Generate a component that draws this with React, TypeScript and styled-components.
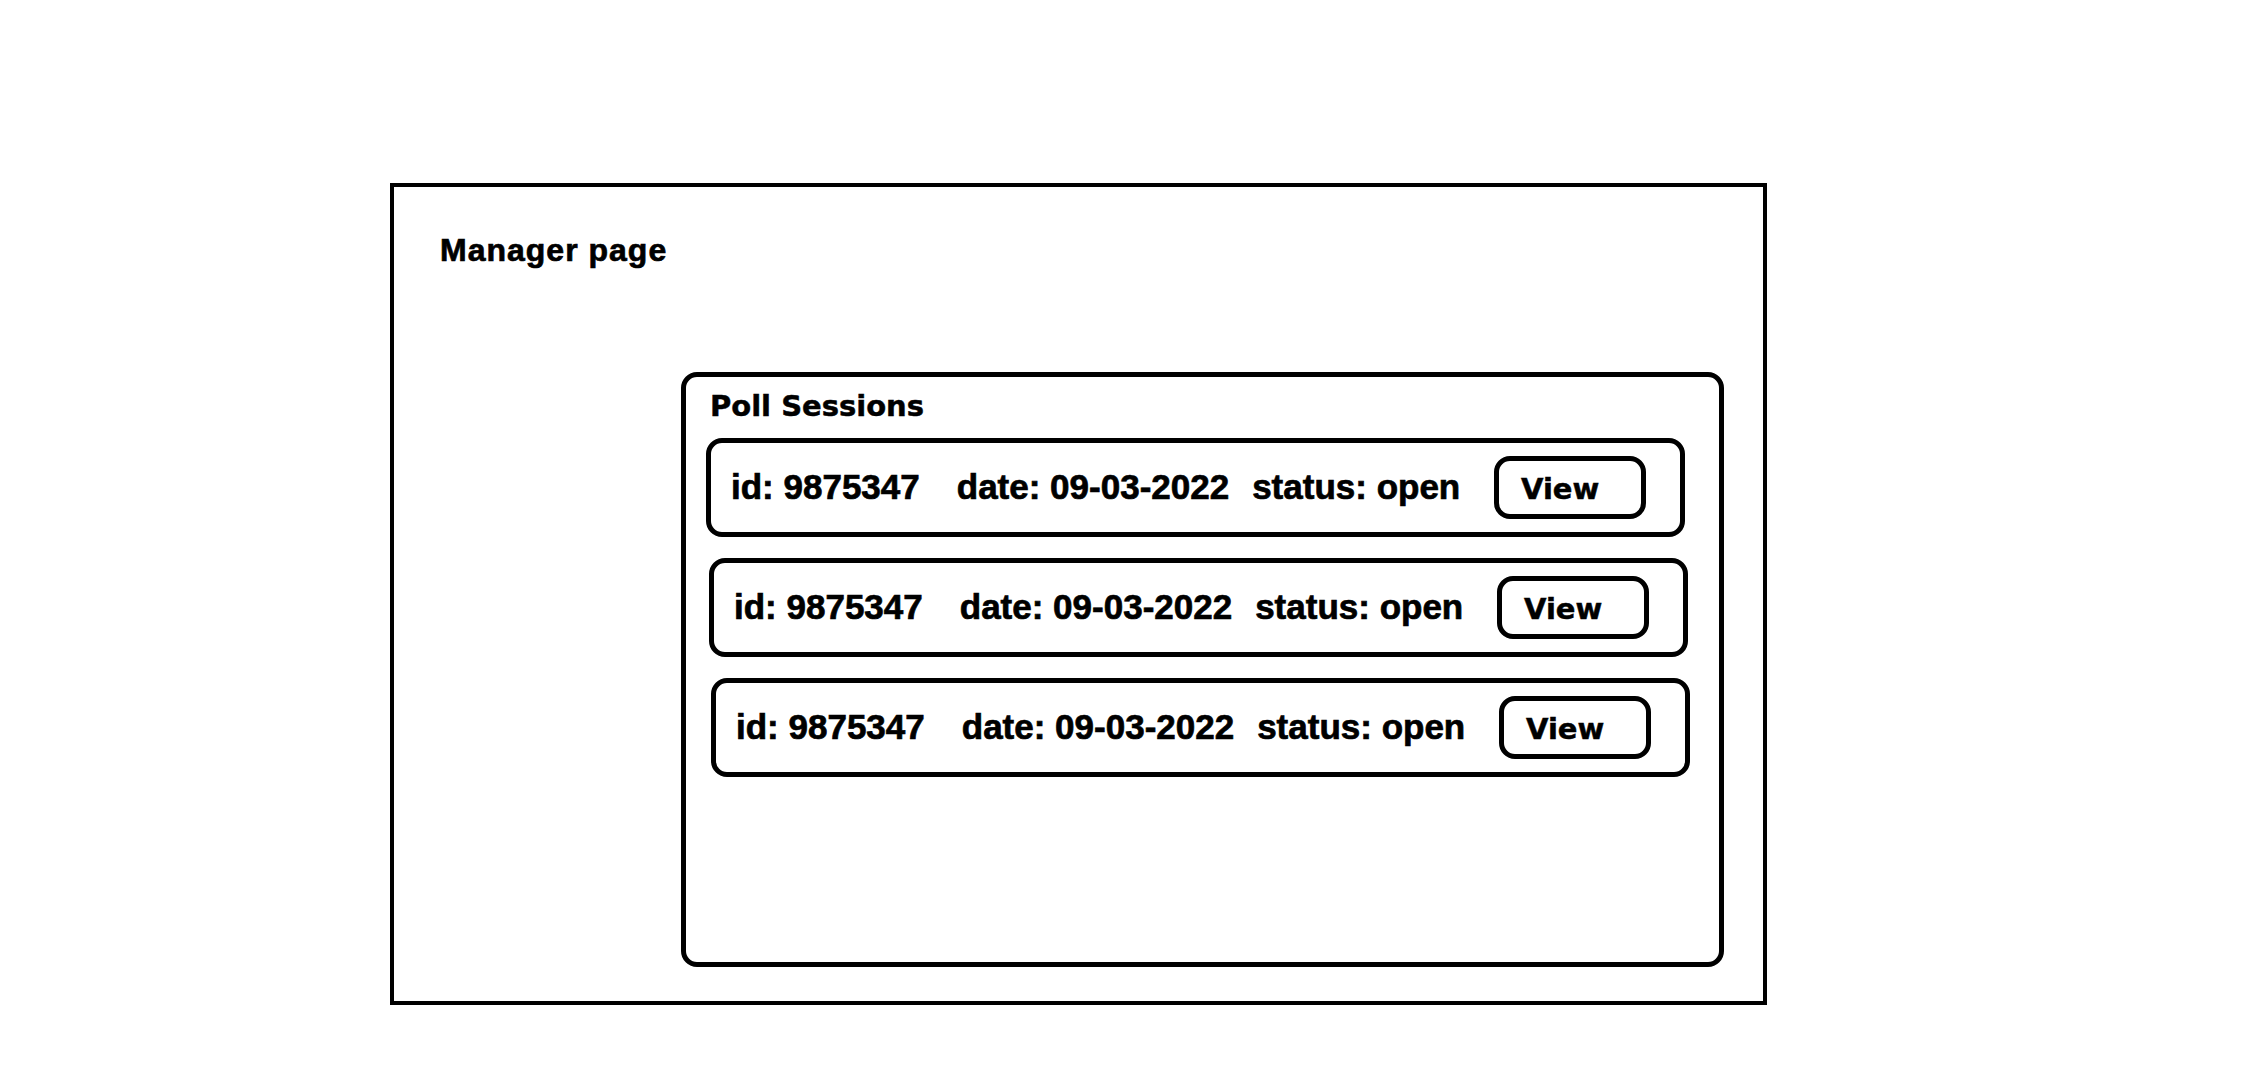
import styled, { createGlobalStyle } from "styled-components";

const sessions = [
  { id: "9875347", date: "09-03-2022", status: "open", offset: 0 },
  { id: "9875347", date: "09-03-2022", status: "open", offset: 3 },
  { id: "9875347", date: "09-03-2022", status: "open", offset: 5 },
];

const GlobalStyle = createGlobalStyle`
  html, body {
    margin: 0;
    padding: 0;
    background: #ffffff;
  }

  body {
    font-family: "Liberation Sans", Arial, sans-serif;
    color: #000000;
  }
`;

const App = () => {
  return (
    <>
      <GlobalStyle />
      <Page>
        <Frame>
          <PageTitle>Manager page</PageTitle>

          <SessionsPanel>
            <PanelTitle>Poll Sessions</PanelTitle>

            <SessionList>
              {sessions.map((s, idx) => (
                <SessionRow key={idx} $offset={s.offset}>
                  <SessionInfo>
                    <InfoItem>id: {s.id}</InfoItem>
                    <InfoItem $gap={37}>date: {s.date}</InfoItem>
                    <InfoItem $gap={23}>status: {s.status}</InfoItem>
                  </SessionInfo>
                  <ViewButton type="button">View</ViewButton>
                </SessionRow>
              ))}
            </SessionList>
          </SessionsPanel>
        </Frame>
      </Page>
    </>
  );
};

const Page = styled.div`
  width: 2244px;
  height: 1080px;
  padding: 183px 0 0 390px;
  box-sizing: border-box;
  background: #ffffff;
`;

const Frame = styled.div`
  width: 1377px;
  height: 822px;
  box-sizing: border-box;
  border: 4px solid #000000;
  padding: 47px 39px 0 46px;
  display: flex;
  flex-direction: column;
`;

const PageTitle = styled.h1`
  margin: 0;
  font-family: "Liberation Sans", Arial, sans-serif;
  font-size: 32px;
  line-height: 1;
  font-weight: 700;
  letter-spacing: 1px;
  -webkit-text-stroke: 0.7px #000000;
`;

const SessionsPanel = styled.section`
  margin-top: 106px;
  margin-left: auto;
  width: 1043px;
  height: 595px;
  box-sizing: border-box;
  border: 5px solid #000000;
  border-radius: 16px;
  padding: 15px 20px 0 20px;
  display: flex;
  flex-direction: column;
`;

const PanelTitle = styled.h2`
  margin: 0 0 0 4px;
  font-family: "DejaVu Sans", Verdana, sans-serif;
  font-size: 29px;
  line-height: 1;
  font-weight: 700;
  -webkit-text-stroke: 0.5px #000000;
`;

const SessionList = styled.div`
  margin-top: 17px;
  display: flex;
  flex-direction: column;
  gap: 21px;
`;

const SessionRow = styled.div<{ $offset: number }>`
  margin-left: ${(p) => p.$offset}px;
  width: 979px;
  height: 99px;
  box-sizing: border-box;
  border: 5px solid #000000;
  border-radius: 16px;
  padding: 0 34px 0 20px;
  display: flex;
  align-items: center;
  justify-content: space-between;
`;

const SessionInfo = styled.div`
  display: flex;
  align-items: baseline;
  padding-bottom: 3px;
`;

const InfoItem = styled.span<{ $gap?: number }>`
  margin-left: ${(p) => p.$gap ?? 0}px;
  font-family: "Liberation Sans", Arial, sans-serif;
  font-size: 35px;
  line-height: 1;
  font-weight: 700;
  white-space: nowrap;
  -webkit-text-stroke: 0.7px #000000;
`;

const ViewButton = styled.button`
  width: 152px;
  height: 63px;
  box-sizing: border-box;
  border: 5px solid #000000;
  border-radius: 16px;
  background: #ffffff;
  color: #000000;
  padding: 4px 0 0 22px;
  display: flex;
  align-items: center;
  font-family: "DejaVu Sans", Verdana, sans-serif;
  font-size: 29px;
  line-height: 1;
  font-weight: 700;
  -webkit-text-stroke: 0.5px #000000;
  cursor: pointer;
`;

export default App;
